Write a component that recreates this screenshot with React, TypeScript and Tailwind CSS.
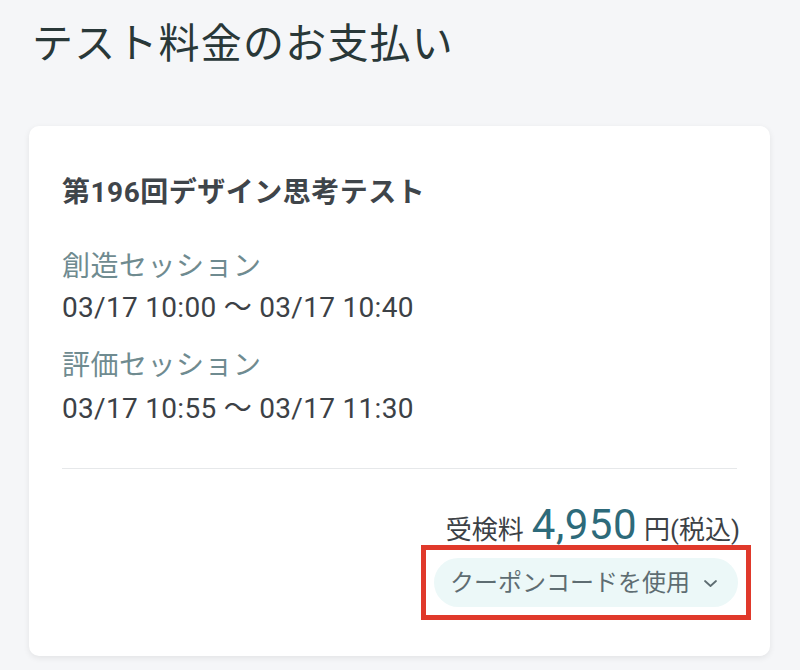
import React from "react";

export default function App() {
  const font = { fontFamily: "Roboto, 'Noto Sans CJK JP', sans-serif" };
  return (
    <div className="w-[800px] h-[670px] bg-[#f5f6f8] overflow-hidden" style={font}>
      <div className="pl-[32px] pt-[20px]">
        <h1 className="text-[41px] leading-[48px] text-[#293838] tracking-[1.2px]">テスト料金のお支払い</h1>
      </div>
      <div className="mt-[58px] ml-[29px] w-[741px] h-[530px] bg-white rounded-[10px] shadow-[0_2px_6px_rgba(0,0,0,0.08)] px-[33px] pt-[47px]">
        <div className="text-[28px] leading-[40px] font-bold text-[#3f454a] tracking-[0.5px]">第196回デザイン思考テスト</div>
        <div className="mt-[34px] text-[28px] leading-[40px] text-[#6f8b90] tracking-[0.5px]">創造セッション</div>
        <div className="mt-[1px] text-[28px] leading-[40px] text-[#3c4146] tracking-[0.3px]">03/17 10:00 〜 03/17 10:40</div>
        <div className="mt-[18px] text-[28px] leading-[40px] text-[#6f8b90] tracking-[0.5px]">評価セッション</div>
        <div className="mt-[3px] text-[28px] leading-[40px] text-[#3c4146] tracking-[0.3px]">03/17 10:55 〜 03/17 11:30</div>
        <div className="mt-[39px] h-px bg-[#e6e8ea]" />
        <div className="mt-[35px] -mr-[3px] flex justify-end items-baseline text-[#3c4146] leading-none">
          <span className="text-[26px]">受検料</span>
          <span className="ml-[8px] text-[42px] text-[#2d6a7a] tracking-[0.5px]">4,950</span>
          <span className="ml-[7px] text-[26px]">円(税込)</span>
        </div>
        <div className="flex justify-end mt-[-1px] -mr-[14px]">
          <div className="border-[5px] border-[#e0392b] p-[8px]">
            <button className="h-[49px] rounded-full bg-[#ecf8f8] pl-[16px] pr-[20px] flex items-center gap-[13px] text-[24px] text-[#5e6d72]">
              <span>クーポンコードを使用</span>
              <svg width="15" height="10" viewBox="0 0 15 10" fill="none">
                <path d="M2 3l5.5 5 5.5-5" stroke="#5e6d72" strokeWidth="1.8" strokeLinecap="round" strokeLinejoin="round" />
              </svg>
            </button>
          </div>
        </div>
      </div>
    </div>
  );
}
